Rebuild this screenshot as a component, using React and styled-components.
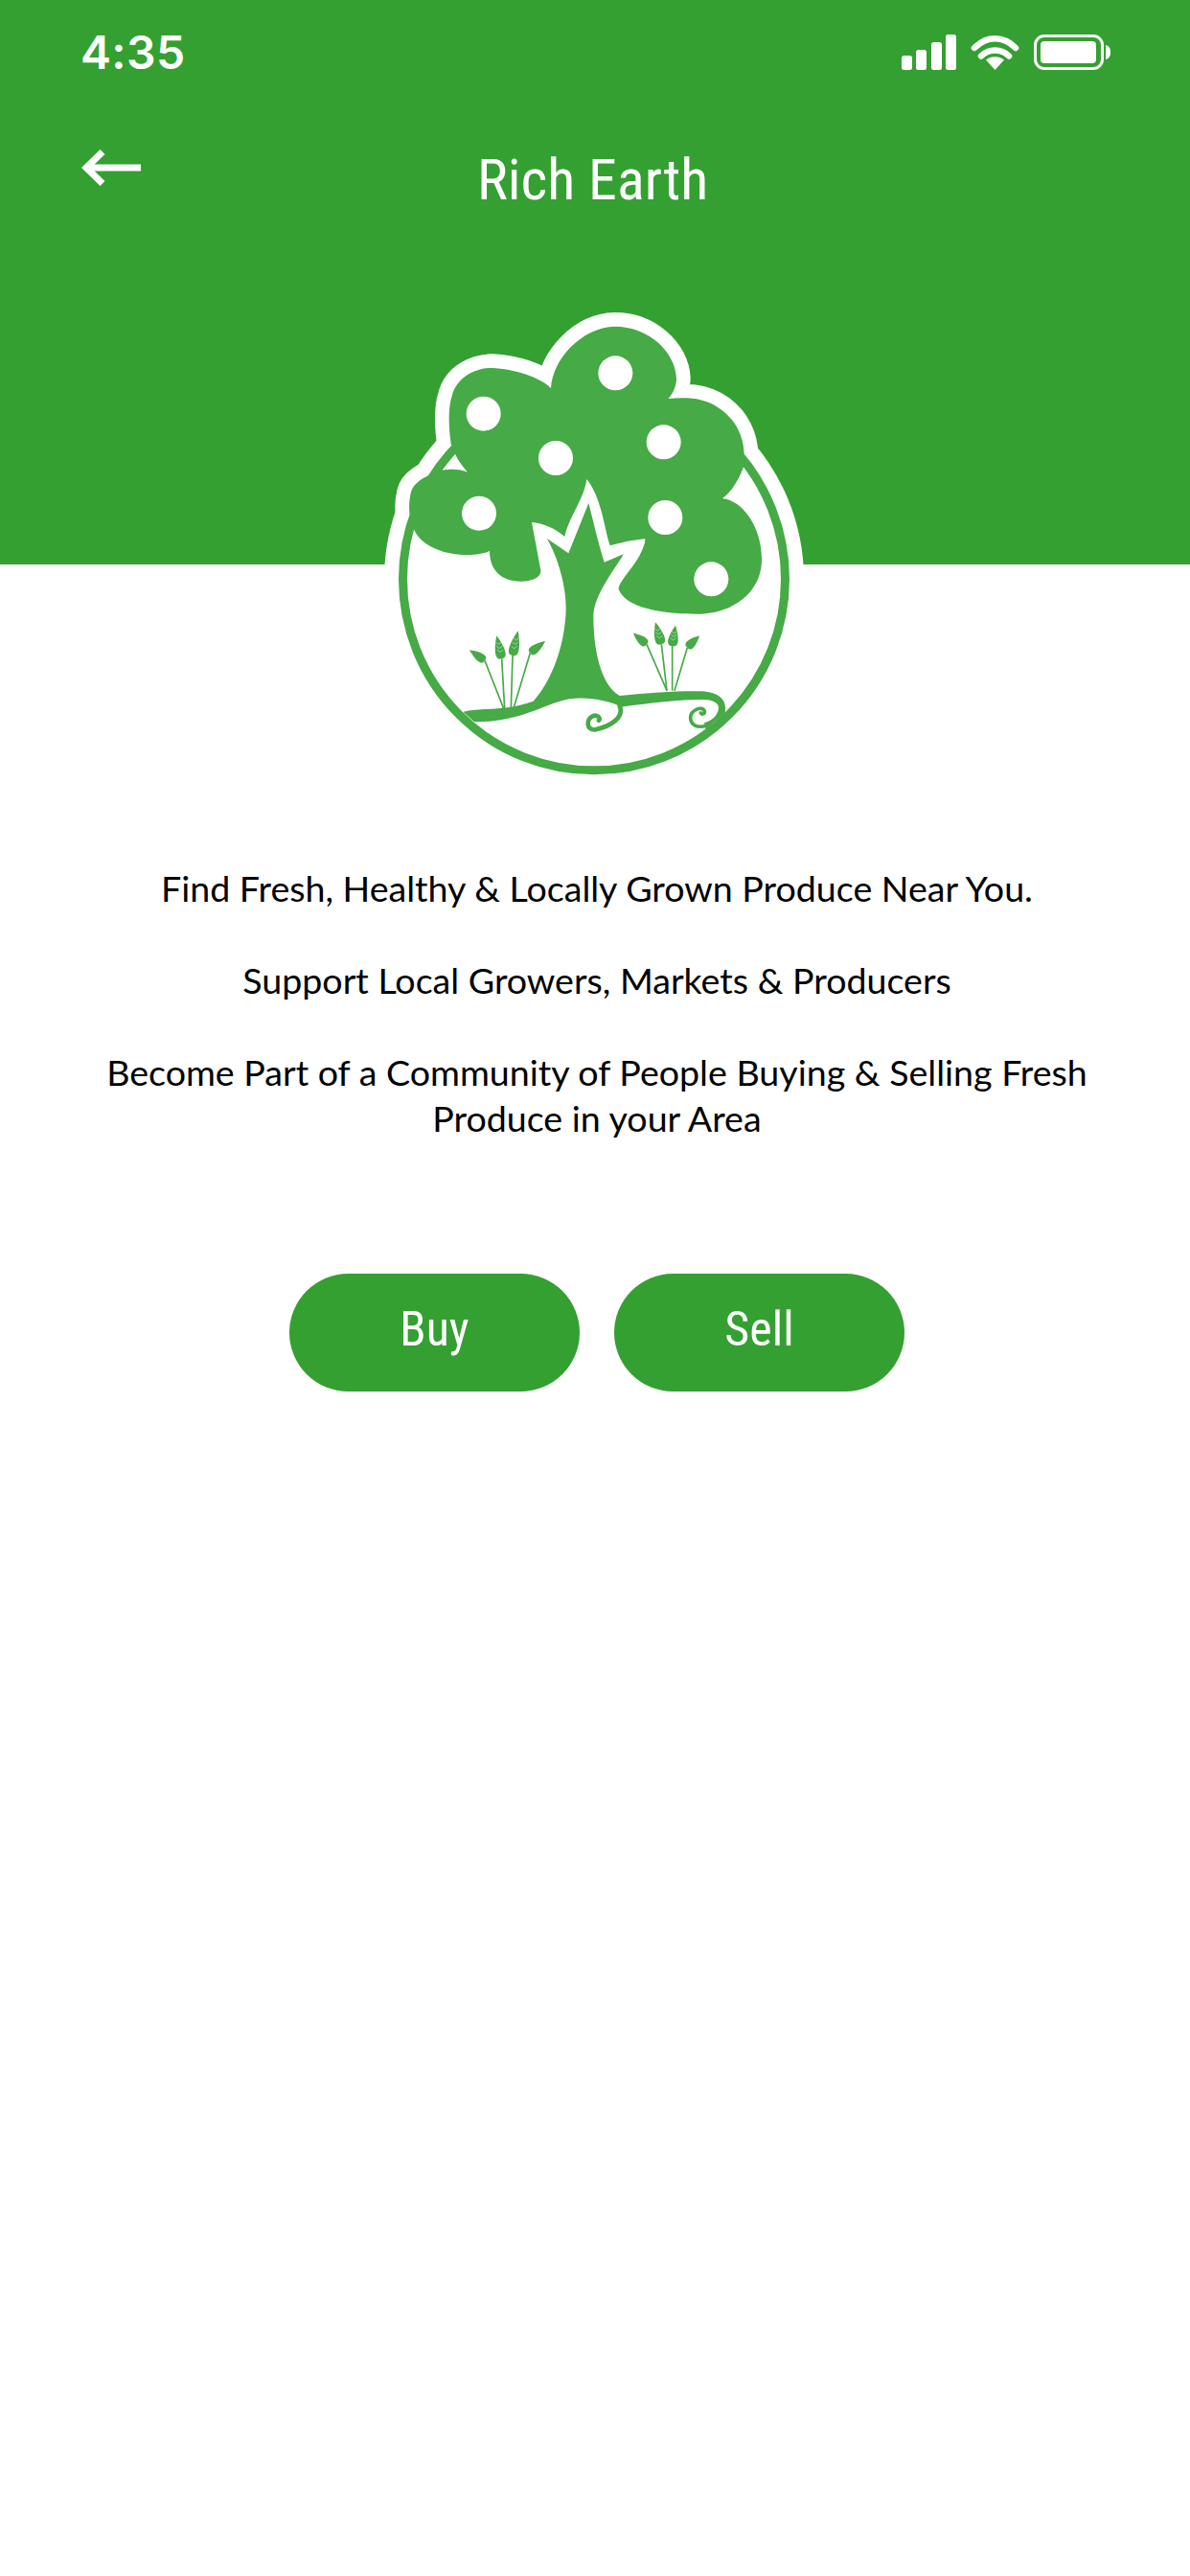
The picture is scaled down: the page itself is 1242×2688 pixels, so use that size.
import React from "react";
import styled, { createGlobalStyle } from "styled-components";

const GREEN = "#34a031";
const LOGO = "#46aa46";

const Global = createGlobalStyle`
  html, body { margin: 0; padding: 0; background: #fff; }
  #root { width: 1242px; min-height: 2688px; }
`;

const Page = styled.div`
  width: 1242px;
  min-height: 2688px;
  background: #fff;
  display: flex;
  flex-direction: column;
  overflow: hidden;
`;

const Header = styled.header`
  position: relative;
  height: 589px;
  background: ${GREEN};
  color: #fff;
  padding: 34px 83px 0 85px;
  box-sizing: border-box;
`;

const StatusBar = styled.div`
  display: flex;
  align-items: flex-start;
  justify-content: space-between;
  height: 42px;
`;

const Time = styled.span`
  margin-left: -1px;
  font: 600 48px/42px Inter, "Liberation Sans", sans-serif;
  letter-spacing: 0.4px;
`;

const StatusIcons = styled.svg`
  display: block;
  width: 218px;
  height: 38px;
  margin-top: 2px;
`;

const NavRow = styled.div`
  display: flex;
  align-items: flex-start;
  margin-top: 80px;
`;

const BackArrow = styled.svg`
  display: block;
  width: 62px;
  height: 38px;
  flex: none;
`;

const Title = styled.h1`
  margin: -2px 0 0 351px;
  font: 400 60px/68px "Roboto Condensed", Roboto, sans-serif;
  font-stretch: condensed;
  white-space: nowrap;
`;

const LogoArt = styled.svg`
  position: absolute;
  left: 380px;
  top: 300px;
  width: 480px;
  height: 520px;
  overflow: visible;
`;

const Content = styled.main`
  display: flex;
  flex-direction: column;
  align-items: center;
  padding: 314px 0 0 4px;
`;

const Copy = styled.div`
  width: 1060px;
  display: flex;
  flex-direction: column;
  gap: 48px;
`;

const Para = styled.p`
  margin: 0;
  text-align: center;
  color: #000;
  font: 400 37.6px/48px Lato, "Open Sans", sans-serif;
`;

const Actions = styled.div`
  display: flex;
  gap: 36px;
  margin-top: 138px;
`;

const Pill = styled.button`
  width: 303px;
  height: 123px;
  border: 0;
  border-radius: 62px;
  background: ${GREEN};
  color: #fff;
  padding: 0 0 8px;
  font: 400 50px/60px "Roboto Condensed", Roboto, sans-serif;
  font-stretch: condensed;
`;

const apples = [
  [787, 268], [374, 395], [938, 484], [600, 534], [360, 707], [943, 720], [1087, 913],
];

const CROWN =
  "M585,315 C590,225 680,125 785,122 C890,122 975,200 978,285 C978,310 965,335 952,348 C1000,345 1060,340 1115,380 C1165,415 1190,470 1190,525 C1192,545 1188,560 1187,565 C1170,610 1145,645 1122,660 C1195,670 1245,760 1245,850 C1245,960 1150,1022 1040,1022 C940,1022 820,1005 797,945 C795,925 840,880 862,840 C875,815 880,800 880,787 C840,790 800,800 770,808 C750,750 745,660 697,600 C690,660 640,720 628,780 C600,755 560,738 525,735 L553,885 C555,910 520,920 490,920 C430,920 393,885 393,825 C340,850 190,840 155,755 C140,725 138,680 145,650 C150,610 190,590 243,572 C280,566 305,570 323,578 C310,560 295,545 285,520 L272,490 C265,440 262,380 275,340 C290,280 350,252 400,252 C470,255 550,280 585,315 Z";

const TRUNK =
  "M703,675 C715,720 730,790 752,860 L812,835 C795,870 718,960 718,1030 C718,1130 740,1245 800,1278 C900,1268 990,1262 1060,1264 C1110,1268 1138,1290 1130,1332 L1070,1384 L1065,1362 C1085,1360 1110,1340 1110,1315 C1110,1300 1090,1290 1060,1290 C990,1290 900,1300 805,1313 C770,1295 700,1280 645,1288 C570,1300 490,1362 345,1360 L310,1328 C370,1315 450,1325 530,1295 C590,1230 632,1110 632,1000 C632,930 605,840 572,785 L640,832 Z";

const plants = [
  { tip: [330, 1135], base: [378, 1168], foot: [437, 1318], w: 24 },
  { tip: [415, 1090], base: [431, 1162], foot: [440, 1318], w: 27, ribs: true },
  { tip: [482, 1075], base: [465, 1152], foot: [460, 1318], w: 27, ribs: true },
  { tip: [567, 1107], base: [520, 1144], foot: [468, 1318], w: 24 },
  { tip: [843, 1082], base: [885, 1117], foot: [948, 1262], w: 24 },
  { tip: [912, 1048], base: [931, 1117], foot: [948, 1262], w: 27, ribs: true },
  { tip: [975, 1058], base: [965, 1122], foot: [965, 1262], w: 27, ribs: true },
  { tip: [1050, 1090], base: [1012, 1127], foot: [972, 1262], w: 24 },
];

function leafPath({ tip, base, w }) {
  const dx = base[0] - tip[0];
  const dy = base[1] - tip[1];
  const len = Math.hypot(dx, dy);
  const nx = (-dy / len) * w;
  const ny = (dx / len) * w;
  const at = (t, s) => `${tip[0] + dx * t + nx * s},${tip[1] + dy * t + ny * s}`;
  return `M${tip[0]},${tip[1]} C${at(0.4, 0.5)} ${at(1.05, 1)} ${base[0]},${base[1]} C${at(1.05, -1)} ${at(0.4, -0.5)} ${tip[0]},${tip[1]} Z`;
}

function ribPaths({ tip, base }) {
  const dx = base[0] - tip[0];
  const dy = base[1] - tip[1];
  return [0.35, 0.52, 0.69].map((t) => {
    const cx = tip[0] + dx * t;
    const cy = tip[1] + dy * t;
    return `M${cx - 9},${cy - 5} L${cx},${cy + 2} L${cx + 9},${cy - 5}`;
  });
}

function TreeLogo() {
  return (
    <LogoArt viewBox="0 0 1440 1560">
      <circle cx="720" cy="913" r="657" fill="#fff" />
      <path d={CROWN} fill="#fff" stroke="#fff" strokeWidth="88" strokeLinejoin="round" />
      <circle cx="720" cy="913" r="598.5" fill="#fff" stroke={LOGO} strokeWidth="27" />
      <path d={CROWN} fill={LOGO} />
      {apples.map(([cx, cy]) => (
        <circle key={`${cx}-${cy}`} cx={cx} cy={cy} r="54" fill="#fff" />
      ))}
      <path d={TRUNK} fill={LOGO} />
      <g fill="none" stroke={LOGO} strokeLinecap="round">
        <path strokeWidth="14" d="M800,1310 C815,1345 775,1372 725,1384 C695,1388 695,1352 715,1342 C730,1336 742,1347 735,1355" />
        <path strokeWidth="11" d="M1070,1372 C1045,1380 1022,1370 1022,1347 C1022,1322 1060,1308 1066,1326 C1068,1335 1058,1338 1054,1332" />
      </g>
      {plants.map((p) => (
        <g key={p.tip.join()}>
          <line x1={p.base[0]} y1={p.base[1]} x2={p.foot[0]} y2={p.foot[1]} stroke={LOGO} strokeWidth="5" />
          <path d={leafPath(p)} fill={LOGO} />
          {p.ribs &&
            ribPaths(p).map((d) => (
              <path key={d} d={d} fill="none" stroke="#fff" strokeWidth="2" opacity="0.7" />
            ))}
        </g>
      ))}
    </LogoArt>
  );
}

function StatusGlyphs() {
  return (
    <StatusIcons viewBox="941 36 218 38">
      <g fill="#fff">
        <rect x="941" y="58" width="11" height="15" rx="2.5" />
        <rect x="956" y="52" width="11" height="21" rx="2.5" />
        <rect x="972" y="44" width="11" height="29" rx="2.5" />
        <rect x="987" y="36" width="11" height="37" rx="2.5" />
        <path d="M1038.5 73 L1029 62.5 C1034 58 1043 58 1048 62.5 Z" />
        <path d="M1053 58.5 C1045 50.5 1032 50.5 1024 58.5" fill="none" stroke="#fff" strokeWidth="6.5" strokeLinecap="round" />
        <path d="M1060 50 C1047 37 1030 37 1017 50" fill="none" stroke="#fff" strokeWidth="6.5" strokeLinecap="round" />
        <rect x="1080.5" y="37.5" width="70" height="34" rx="9.5" fill="none" stroke="#fff" strokeWidth="3" />
        <rect x="1086" y="43" width="58" height="23" rx="4" />
        <path d="M1154 47 C1158 48 1159 51 1159 54.5 C1159 58 1158 61 1154 62 Z" />
      </g>
    </StatusIcons>
  );
}

export default function App() {
  return (
    <Page>
      <Global />
      <Header>
        <StatusBar>
          <Time>4:35</Time>
          <StatusGlyphs />
        </StatusBar>
        <NavRow>
          <BackArrow viewBox="0 0 62 38">
            <path d="M62 19 H6 M22 2.5 L5 19 L22 35.5" fill="none" stroke="#fff" strokeWidth="7" />
          </BackArrow>
          <Title>Rich Earth</Title>
        </NavRow>
        <TreeLogo />
      </Header>
      <Content>
        <Copy>
          <Para>Find Fresh, Healthy &amp; Locally Grown Produce Near You.</Para>
          <Para>Support Local Growers, Markets &amp; Producers</Para>
          <Para>
            Become Part of a Community of People Buying &amp; Selling Fresh
            <br />
            Produce in your Area
          </Para>
        </Copy>
        <Actions>
          <Pill>Buy</Pill>
          <Pill>Sell</Pill>
        </Actions>
      </Content>
    </Page>
  );
}
